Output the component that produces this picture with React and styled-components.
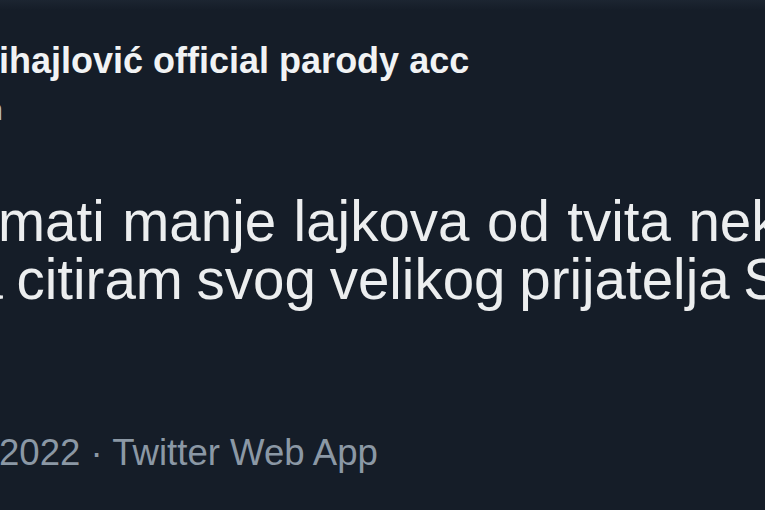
import React from "react";
import styled, { createGlobalStyle } from "styled-components";

const GlobalStyle = createGlobalStyle`
  html, body {
    margin: 0;
    padding: 0;
    background: #151d28;
    overflow: hidden;
  }
`;

function App() {
  return (
    <>
      <GlobalStyle />
      <Tweet>
        <TopEdge />
        <Name>Siniša Mihajlović official parody acc</Name>
        <HandleClip>
          <Handle>@mihajlovic_sin</Handle>
        </HandleClip>
        <Body>
          <Line $shift={-2} $words={1.8}>
            mati manje lajkova od tvita nekog
          </Line>
          <Line $shift={-60} $words={-2}>
            da citiram svog velikog prijatelja Sinišu
          </Line>
        </Body>
        <Meta>2022 · Twitter Web App</Meta>
      </Tweet>
    </>
  );
}

const Tweet = styled.article`
  width: 765px;
  height: 510px;
  overflow: hidden;
  display: flex;
  flex-direction: column;
  background: #151d28;
  font-family: "Liberation Sans", Arial, sans-serif;
`;

const TopEdge = styled.div`
  height: 10px;
  flex-shrink: 0;
  background: linear-gradient(#1c2531, #151d28);
`;

const Name = styled.div`
  margin: 30.5px 0 0 -147px;
  font-size: 36px;
  font-weight: 700;
  line-height: 40px;
  color: #f1f3f4;
  white-space: nowrap;
`;

const HandleClip = styled.div`
  margin-top: 9px;
  width: 3px;
  height: 40px;
  overflow: hidden;
  display: flex;
  justify-content: flex-end;
`;

const Handle = styled.span`
  flex-shrink: 0;
  font-size: 30px;
  line-height: 40px;
  color: #b6bec7;
  white-space: nowrap;
`;

const Body = styled.div`
  margin-top: 63px;
  display: flex;
  flex-direction: column;
  font-size: 56.5px;
  line-height: 58px;
  color: #eceeef;
`;

const Line = styled.span`
  margin-left: ${(p) => p.$shift}px;
  word-spacing: ${(p) => p.$words}px;
  white-space: nowrap;
`;

const Meta = styled.div`
  margin: 124px 0 0 -1px;
  font-size: 36.6px;
  line-height: 40px;
  color: #8b98a5;
  white-space: nowrap;
`;

export default App;
